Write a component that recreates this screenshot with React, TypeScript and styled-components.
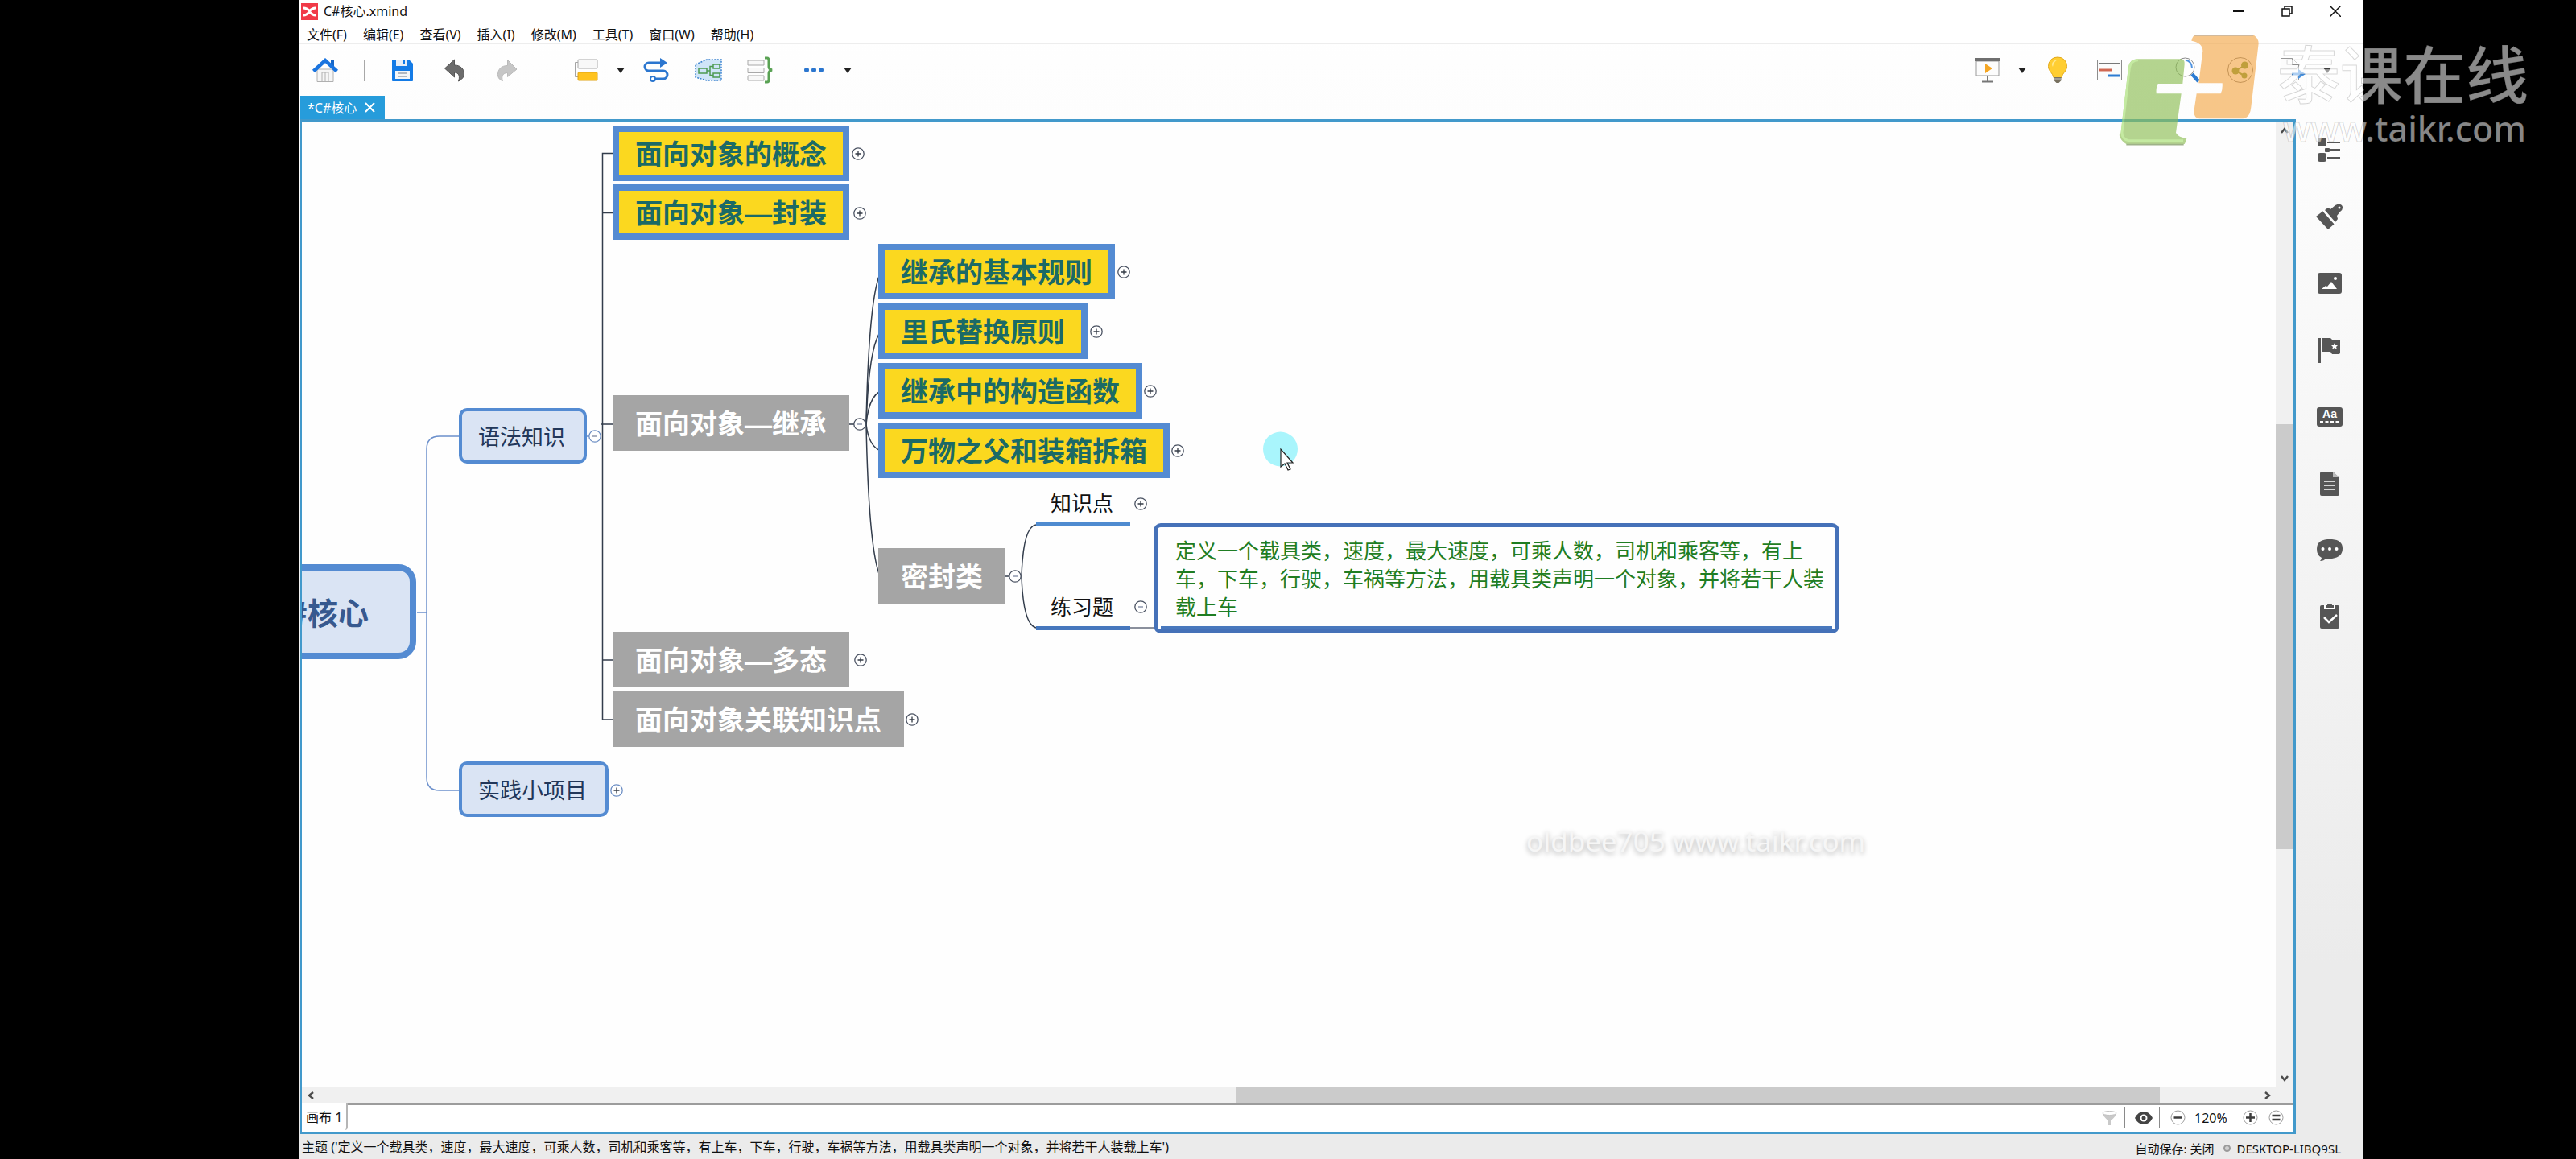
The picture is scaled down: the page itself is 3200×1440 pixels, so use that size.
import React from 'react';
import styled, { createGlobalStyle } from 'styled-components';

const GlobalStyle = createGlobalStyle`
  * { box-sizing: border-box; }
  body { margin: 0; background: #000; }
  button {
    margin: 0; padding: 0; border: 0; background: none;
    font: inherit; color: inherit; cursor: pointer;
  }
  svg { display: block; flex: none; }
`;

const ui = `'Noto Sans', 'Noto Sans CJK SC', sans-serif`;
const cjk = `'Noto Sans CJK SC', 'Noto Sans', sans-serif`;
const frameBlue = '#4299cb';
const topicBlue = '#548bd2';

/* ---------- shell ---------- */

const Page = styled.div`
  position: relative;
  display: flex;
  min-height: 100vh;
  padding: 0 265px 0 371px;
  overflow: hidden;
  background: #000;
  font-family: ${ui};
  font-size: 16px;
  line-height: 24px;
  color: #111;
`;
const AppWindow = styled.div`
  flex: 1;
  min-width: 0;
  display: flex;
  flex-direction: column;
  background: linear-gradient(#fff 0, #fdfdfd 150px, #ebebeb 1200px);
`;
const TitleBar = styled.header`
  display: flex;
  align-items: center;
  height: 28px;
  padding: 0 4px 0 3px;
  background: #fff;
`;
const Title = styled.h1`
  flex: 1;
  margin: 0 0 0 7px;
  font-size: 16px;
  font-weight: 400;
`;
const WindowButton = styled.button`
  display: flex;
  align-items: center;
  justify-content: center;
  width: 60px;
  height: 24px;
`;
const MenuBar = styled.nav`
  display: flex;
  height: 27px;
  background: #fff;
  border-bottom: 2px solid #ededed;
`;
const MenuItem = styled.button`
  padding: 3px 10px 0;
  height: 26px;
`;
const ToolBar = styled.div`
  display: flex;
  justify-content: space-between;
  height: 64px;
  padding-right: 33px;
`;
const ToolGroup = styled.div`
  display: flex;
  align-items: center;
`;
const ToolButton = styled.button<{ $narrow?: boolean }>`
  display: flex;
  align-items: center;
  justify-content: center;
  width: ${p => (p.$narrow ? 22 : 65)}px;
  height: 40px;
`;
const ToolDivider = styled.span`
  width: 1px;
  height: 27px;
  margin: 0 15px 0 16px;
  background: #a8a8a8;
`;
const TabStrip = styled.div`
  display: flex;
  height: 29px;
  padding-left: 2px;
`;
const FileTab = styled.div`
  display: flex;
  align-items: center;
  gap: 10px;
  padding: 0 12px 0 9px;
  background: #269cdb;
  color: #fff;
`;
const Body = styled.div`
  flex: 1;
  display: flex;
  min-height: 0;
  padding-left: 2px;
`;
const Editor = styled.main`
  flex: 1;
  min-width: 0;
  display: flex;
  flex-direction: column;
  border: solid ${frameBlue};
  border-width: 3px 4px 3px 2px;
  background: #fff;
`;
const SidePanel = styled.aside`
  display: flex;
  flex-direction: column;
  align-items: center;
  gap: 51px;
  width: 83px;
  padding-top: 22px;
`;
const SideButton = styled.button`
  width: 34px;
  height: 32px;
`;

/* ---------- editor ---------- */

const CanvasRow = styled.div`
  flex: 1;
  display: flex;
  min-height: 0;
`;
const Canvas = styled.div`
  position: relative;
  flex: 1;
  overflow: hidden;
  background: #fefefe;
`;
const ScrollTrack = styled.div<{ $vertical?: boolean }>`
  display: flex;
  flex-direction: ${p => (p.$vertical ? 'column' : 'row')};
  align-items: center;
  ${p => (p.$vertical ? 'width: 21px;' : 'height: 21px; padding-right: 21px;')}
  background: #f0f0f0;
`;
const ArrowButton = styled.button`
  display: flex;
  align-items: center;
  justify-content: center;
  width: 21px;
  height: 21px;
`;
const ScrollSpace = styled.span<{ $grow: number }>`
  flex: ${p => p.$grow} 0 0;
`;
const ScrollThumb = styled.span<{ $grow: number }>`
  flex: ${p => p.$grow} 0 0;
  align-self: stretch;
  background: #cbcbcb;
`;
const SheetBar = styled.div`
  display: flex;
  justify-content: space-between;
  height: 35px;
  border-top: 2px solid #9c9c9c;
  background: #fff;
`;
const SheetTab = styled.button`
  height: 33px;
  margin-top: -2px;
  padding: 0 5px;
  border-right: 2px solid #b5b5b5;
  border-radius: 0 0 4px 0;
  background: #fff;
`;
const ZoomTools = styled.div`
  display: flex;
  align-items: center;
  height: 31px;
  padding-right: 11px;
`;
const SmallButton = styled.button<{ $left?: number; $right?: number }>`
  margin-left: ${p => p.$left ?? 0}px;
  margin-right: ${p => p.$right ?? 0}px;
`;
const SmallDivider = styled.span`
  width: 1px;
  height: 25px;
  background: #8a8a8a;
`;
const ZoomValue = styled.output`
  width: 62px;
  padding-left: 2px;
  text-align: left;
`;
const StatusBar = styled.footer`
  display: flex;
  justify-content: space-between;
  align-items: center;
  height: 31px;
  padding: 0 27px 0 4px;
  background: #ebebeb;
`;
const StatusInfo = styled.div`
  display: flex;
  align-items: center;
  padding-top: 4px;
  font-size: 15px;
`;
const StatusDot = styled.span`
  width: 9px;
  height: 9px;
  margin: 0 7px 0 12px;
  border: 2px solid #9a9a9a;
  border-radius: 50%;
  background: #d0d0d0;
`;

/* ---------- mind map ---------- */

const Wires = styled.svg`
  position: absolute;
  left: 0;
  top: 0;
  overflow: visible;
`;
const Placed = styled.div<{ $x: number; $y: number }>`
  position: absolute;
  left: ${p => p.$x}px;
  top: ${p => p.$y}px;
  white-space: nowrap;
  font-family: ${cjk};
`;
const Topic = styled(Placed)<{ $done?: boolean }>`
  padding: 3px 20px 0;
  border: 8px solid ${p => (p.$done ? topicBlue : '#a5a5a5')};
  background: ${p => (p.$done ? '#fbd81f' : '#a5a5a5')};
  color: ${p => (p.$done ? '#1b6a66' : '#fff')};
  font-family: 'Liberation Sans', ${cjk};
  font-size: 34px;
  font-weight: 700;
  line-height: 50px;
`;
const Branch = styled(Placed)`
  padding: 0 23px 0 20px;
  border: 4px solid ${topicBlue};
  border-radius: 10px;
  background: #dae4f4;
  color: #22375a;
  font-size: 27px;
  line-height: 61px;
`;
const Root = styled(Placed)`
  width: 241px;
  padding-right: 51px;
  border: 8px solid ${topicBlue};
  border-radius: 22px;
  background: #dae4f4;
  color: #37598f;
  font-size: 38px;
  font-weight: 700;
  line-height: 102px;
  text-align: right;
`;
const Leaf = styled(Placed)<{ $dark?: boolean }>`
  padding: 0 21px 4px 18px;
  border-bottom: 5px solid ${p => (p.$dark ? '#4677bd' : '#4f8bd0')};
  color: #111;
  font-size: 26px;
  line-height: 42px;
`;
const NoteTopic = styled(Placed)`
  width: 852px;
  padding: 10px 10px 0 22px;
  border: 5px solid #4571b8;
  border-radius: 9px;
  background: #fefefe;
  color: #1f7d22;
  font-size: 26px;
  line-height: 35px;
  white-space: normal;
`;
const NoteRule = styled.div`
  height: 4px;
  margin: 8px -6px 0 -18px;
  background: #4878bd;
`;
const Knob = styled.button<{ $x: number; $y: number }>`
  position: absolute;
  left: ${p => p.$x - 8}px;
  top: ${p => p.$y - 8}px;
  width: 16px;
  height: 16px;
`;
const Pointer = styled.svg`
  position: absolute;
  left: 1194px;
  top: 385px;
`;
const CanvasMark = styled.div`
  position: absolute;
  left: 1521px;
  top: 870px;
  font-size: 35px;
  line-height: 48px;
  color: #f6f6f6;
  text-shadow: 0 3px 6px rgba(0, 0, 0, 0.3);
`;

/* ---------- brand overlay ---------- */

const Brand = styled.div`
  position: absolute;
  top: 40px;
  right: 59px;
  display: flex;
  gap: 17px;
  pointer-events: none;
`;
const BrandText = styled.div`
  padding-top: 2px;
  color: rgba(255, 255, 255, 0.54);
  -webkit-text-stroke: 1px rgba(0, 0, 0, 0.16);
  font-weight: 500;
  white-space: nowrap;
`;
const BrandName = styled.div`
  font-family: ${cjk};
  font-size: 78px;
  line-height: 94px;
`;
const BrandSite = styled.div`
  padding-left: 7px;
  font-size: 43px;
  line-height: 48px;
`;

/* ---------- icons ---------- */

const Icon = ({ children, h = 34 }: { children: React.ReactNode; h?: number }) => (
  <svg width="34" height={h} viewBox={`0 0 34 ${h}`} fill="none" aria-hidden="true">{children}</svg>
);
const Caret = () => (
  <svg width="10" height="8" viewBox="0 0 10 8" aria-hidden="true"><path d="M0 1h10L5 8z" fill="#222" /></svg>
);

const HomeIcon = () => (
  <Icon>
    <path d="M7 16h20v15.500H7z" fill="#f6f6f6" stroke="#b0b0b0" />
    <path d="M13 31V20h8v11M17 20v11" stroke="#b0b0b0" />
    <path d="M24 4h4v9h-4z" fill="#1767c8" />
    <path d="M2.500 18.500 17 5l14.500 13.500" stroke="#1a74df" strokeWidth="4.500" />
  </Icon>
);
const SaveIcon = () => (
  <Icon>
    <path d="M3 4h21l5 5v21a1 1 0 0 1-1 1H4a1 1 0 0 1-1-1z" fill="#147be6" />
    <path d="M8 4h14v8H8z" fill="#e8eef6" /><path d="M16 5h3v5h-3z" fill="#147be6" />
    <path d="M7 18h18v10H7z" fill="#f4f6f8" />
    <path d="M10 21h12M10 25h12" stroke="#9aa4ae" strokeWidth="1.500" />
  </Icon>
);
const UndoIcon = () => (
  <Icon>
    <path d="M15.500 4v7c8 0 12 5 12 11 0 4-3 7-7 9 2-5 1-11-5-11v6L3.500 15z" fill="#6c6c6c" stroke="#555" />
  </Icon>
);
const RedoIcon = () => (
  <Icon>
    <path d="M16.500 4.500v7c-8 0-12 5-12 11 0 4 2 7 6 8-2-5 0-10 6-10v5L28 16z" fill="#c6c6c6" stroke="#bababa" />
  </Icon>
);
const TopicIcon = () => (
  <Icon>
    <path d="M7 7.500H3.500v18H7" stroke="#a4a4a4" />
    <rect x="7" y="4" width="24" height="11" rx="1" fill="#f8f8f8" stroke="#a8a8a8" />
    <rect x="7" y="20" width="24" height="10" rx="1" fill="#ffc31f" stroke="#e0a416" />
  </Icon>
);
const RelationIcon = () => (
  <Icon>
    <path d="M24 8H8a5 5 0 0 0 0 10h18a5 5 0 0 1 0 10H16" stroke="#2b76cf" strokeWidth="3" />
    <path d="m22 2 9 6-9 6z" fill="#2b76cf" />
    <circle cx="13" cy="28" r="3" stroke="#2b76cf" strokeWidth="2" fill="#fff" />
  </Icon>
);
const BoundaryIcon = () => (
  <Icon>
    <path d="M1 10 15 4h18v26H15L1 26z" fill="#cfe5f8" stroke="#3a82d0" strokeWidth="1.500" strokeDasharray="2 1.500" />
    <path d="M5 15h10v6H5zM23 10h8v5h-8zM23 21h8v5h-8zM15 18h4M23 12.500h-4v11h4" stroke="#4e9a50" strokeWidth="1.500" />
  </Icon>
);
const SummaryIcon = () => (
  <Icon>
    <path d="M1 5h20v6H1zM1 14.500h20v6H1zM1 24h20v6H1z" fill="#f8f8f8" stroke="#a8a8a8" />
    <path d="M22 2h3q2 0 2 3v8q0 3 4 4-4 1-4 4v8q0 3-2 3h-3" stroke="#5aa254" strokeWidth="3" />
  </Icon>
);
const MoreIcon = () => (
  <Icon>
    <g fill="#2b76cf"><circle cx="9" cy="17" r="3" /><circle cx="18" cy="17" r="3" /><circle cx="27" cy="17" r="3" /></g>
  </Icon>
);
const PresentIcon = () => (
  <Icon>
    <path d="M3 6h28v18H3z" fill="#fcfcfc" stroke="#999" /><path d="M1 2h32v4H1z" fill="#6f6f6f" />
    <path d="m14 9 9 6-9 6z" fill="#f5a623" /><path d="M17 24v7M10 31.500h14" stroke="#777" strokeWidth="2" />
  </Icon>
);
const BulbIcon = () => (
  <Icon>
    <path d="M17 1a11 11 0 0 1 11.500 11.500c0 6-5.500 8-6.500 14H12c-1-6-6.500-8-6.500-14A11 11 0 0 1 17 1z" fill="#ffce32" stroke="#e3a91c" />
    <path d="M11 7q3-3 6-3-5 3-6 9-2-3 0-6z" fill="#ffe88c" />
    <path d="M12.500 26h9v4l-3 3h-3l-3-3z" fill="#77705f" /><path d="M12.500 28h9" stroke="#ccc" />
  </Icon>
);
const GanttIcon = () => (
  <Icon>
    <path d="M1.500 4.500h30v25h-30z" fill="#fbfbfb" stroke="#8d8d8d" /><path d="M3.500 11V8.500h26V11" stroke="#777" />
    <path d="M3 17h16" stroke="#cf6651" strokeWidth="3" /><path d="M15 24h15" stroke="#2b7bd2" strokeWidth="3" />
  </Icon>
);
const SearchIcon = () => (
  <Icon>
    <path d="m22 22 8 9" stroke="#2b7bd2" strokeWidth="4.500" />
    <circle cx="13.500" cy="13.500" r="11.500" stroke="#8a8a8a" fill="#fff" fillOpacity=".4" />
    <path d="M14 4.500q8 2 8 10" stroke="#4f93e0" strokeWidth="2" />
  </Icon>
);
const ShareIcon = () => (
  <Icon>
    <circle cx="17" cy="17" r="15.500" stroke="#6d6d6c" />
    <path d="M23 11 11 18l11 6" stroke="#5f8f1e" strokeWidth="2" />
    <g fill="#5f8f1e"><circle cx="22.500" cy="11" r="4.500" /><circle cx="11" cy="18" r="4.500" /><circle cx="22" cy="24" r="3.500" /></g>
  </Icon>
);
const ExportIcon = () => (
  <Icon>
    <path d="M2.500 2.500h14l8 8v19h-22z" fill="#fcfcfc" stroke="#999" /><path d="M16.500 2.500v8h8" stroke="#999" />
    <path d="M16 20.500h8v-4.500l9 6-9 6v-4.500h-8z" fill="#4a94e2" />
  </Icon>
);

const ink = '#565656';
const sideIcons: [string, React.ReactNode][] = [
  ['大纲', <g key="g" fill={ink}><rect x="2" y="1" width="11" height="11" rx="3" /><rect x="11" y="14" width="6" height="5" rx="1" /><rect x="2" y="20" width="11" height="11" rx="3" /><path d="M14 6h16v2H14zM18 15h12v2H18zM14 25h16v2H14z" /></g>],
  ['格式', <g key="g" fill={ink}><path d="M0 16 9 9l14 16-8 7zM11 8l4-3 3 2 6-5q5-3 8 0 3 4-2 8l-4 5 1 4-3 4z" /><path d="m9 9 15 17" stroke="#fff" strokeWidth="1.500" /><circle cx="29" cy="5" r="1.500" fill="#fff" /></g>],
  ['图片', <g key="g"><rect x="2" y="3" width="30" height="26" rx="3" fill={ink} /><path d="m7 23 5-4 2 1 5-6 7 9z" fill="#fff" /><circle cx="24" cy="10" r="2" fill="#fff" /></g>],
  ['图标', <g key="g" fill={ink}><path d="M2 1h4v31H2zM7 1h11l2 2h10v16q0 2-2 2h-8l-2-3H7z" /><path d="m23 7 1 3h3l-2 2 1 3-3-2-3 2 1-3-2-2h3z" fill="#fff" /></g>],
  ['标签', <g key="g"><rect x="1" y="4" width="32" height="24" rx="3" fill={ink} /><text x="17" y="17" fontFamily="Liberation Sans, sans-serif" fontSize="14" fontWeight="700" textAnchor="middle" fill="#fff">Aa</text><path d="M5 22.500h24" stroke="#fff" strokeWidth="3" strokeDasharray="4 2.500" /></g>],
  ['备注', <g key="g"><path d="M7 1h14l8 8v20q0 2-2 2H7q-2 0-2-2V3q0-2 2-2z" fill={ink} /><path d="M21 1v7h8z" fill="#bbb" /><path d="M10 13h14M10 18h14M10 23h14" stroke="#fff" strokeWidth="1.500" /></g>],
  ['批注', <g key="g"><path d="M14 2h6q13 1 13 11.500T20 26H12q-2 3-7 3 2-2 2-4-6-3-6-11Q1 3 14 2z" fill={ink} /><g fill="#fff"><circle cx="8.500" cy="14" r="2" /><circle cx="17" cy="14" r="2" /><circle cx="25.500" cy="14" r="2" /></g></g>],
  ['任务', <g key="g"><rect x="5" y="1" width="24" height="29" rx="2" fill={ink} /><path d="M10 1h14v5H10z" fill="#fff" /><path d="M12 1h2q0-2 3-2t3 2h2v3H12z" fill={ink} /><path d="m10 16 6 6 10-9" stroke="#fff" strokeWidth="2.500" fill="none" /></g>],
];

const Chevron = ({ turn }: { turn: number }) => (
  <svg width="12" height="12" viewBox="0 0 12 12" aria-hidden="true">
    <path d="m2 9 4-5 4 5" transform={`rotate(${turn} 6 6)`} fill="none" stroke="#4a4a4a" strokeWidth="2.500" />
  </svg>
);
const RoundIcon = ({ d }: { d: string }) => (
  <svg width="19" height="19" viewBox="0 0 19 19" aria-hidden="true">
    <circle cx="9.500" cy="9.500" r="8.500" fill="#fff" stroke="#9a9a9a" />
    <path d={d} stroke="#3d3d3d" strokeWidth="2.500" />
  </svg>
);

/* ---------- data ---------- */

const menus = ['文件(F)', '编辑(E)', '查看(V)', '插入(I)', '修改(M)', '工具(T)', '窗口(W)', '帮助(H)'];

const topics = [
  { x: 386, y: 5, text: '面向对象的概念', done: true },
  { x: 386, y: 78, text: '面向对象—封装', done: true },
  { x: 716, y: 152, text: '继承的基本规则', done: true },
  { x: 716, y: 226, text: '里氏替换原则', done: true },
  { x: 716, y: 300, text: '继承中的构造函数', done: true },
  { x: 716, y: 374, text: '万物之父和装箱拆箱', done: true },
  { x: 386, y: 340, text: '面向对象—继承' },
  { x: 716, y: 530, text: '密封类' },
  { x: 386, y: 634, text: '面向对象—多态' },
  { x: 386, y: 708, text: '面向对象关联知识点' },
];

const knobs = [
  { x: 691, y: 40 }, { x: 693, y: 114 }, { x: 1021, y: 187 }, { x: 987, y: 261 },
  { x: 1054, y: 335 }, { x: 1088, y: 409 }, { x: 1042, y: 475 }, { x: 694, y: 669 },
  { x: 758, y: 743 }, { x: 391, y: 831, blue: true },
  { x: 693, y: 376, open: true }, { x: 886, y: 565, open: true },
  { x: 1042, y: 603, open: true }, { x: 364, y: 391, open: true, blue: true },
];

const childEnds = [192, 264, 336, 408, 562];
const exercise = '定义一个载具类，速度，最大速度，可乘人数，司机和乘客等，有上车，下车，行驶，车祸等方法，用载具类声明一个对象，并将若干人装载上车';

/* ---------- app ---------- */

const MindMap = () => (
  <Canvas>
    <Wires width="1" height="1" fill="none" aria-hidden="true">
      <path d="M143 610h12M195 391h-24q-16 0-16 16v408q0 16 16 16h24M353 391h4" stroke="#6c90cc" strokeWidth="1.500" />
      <g stroke="#333d4c" strokeWidth="1.500">
        <path d="M386 39.500h-12.500v703.500H386M374 113.500h12M372 376h14M374 669h12M680 376h6M872 565h7" />
        {childEnds.map(y => (
          <path key={y} d={`M701 376Q704 ${y + Math.round((376 - y) * 0.2)} 717 ${y}`} />
        ))}
        <path d="M894 565Q896 503 912 501M894 565Q896 625 912 629" />
      </g>
      <path d="M1029 629h30" stroke="#8a8f9c" strokeWidth="2" />
    </Wires>
    <Root $x={-99} $y={550}>C#核心</Root>
    <Branch $x={195} $y={356}>语法知识</Branch>
    <Branch $x={195} $y={795}>实践小项目</Branch>
    {topics.map(t => (
      <Topic key={t.text} $x={t.x} $y={t.y} $done={t.done}>{t.text}</Topic>
    ))}
    <Leaf $x={912} $y={452}>知识点</Leaf>
    <Leaf $x={912} $y={581} $dark>练习题</Leaf>
    <NoteTopic $x={1058} $y={499}>
      {exercise}
      <NoteRule />
    </NoteTopic>
    {knobs.map(k => (
      <Knob key={`${k.x}-${k.y}`} $x={k.x} $y={k.y} aria-label={k.open ? '收起' : '展开'}>
        <svg width="16" height="16" viewBox="0 0 16 16" aria-hidden="true">
          <circle cx="8" cy="8" r="7.200" fill="#fff" stroke={k.blue ? '#6c8ec4' : '#4a5262'} strokeWidth="1.300" />
          <path d={k.open ? 'M5 8h6' : 'M4.500 8h7M8 4.500v7'} stroke={k.open ? '#7a86a0' : '#333a46'} strokeWidth="1.300" />
        </svg>
      </Knob>
    ))}
    <Pointer width="44" height="50" viewBox="0 0 44 50" aria-hidden="true">
      <circle cx="21.500" cy="22" r="21.500" fill="#a9f5fc" />
      <path d="M22 22v22l5-4 4 8 3-1-4-8h7z" fill="#fff" stroke="#222" strokeWidth="1.200" />
    </Pointer>
    <CanvasMark>oldbee705 www.taikr.com</CanvasMark>
  </Canvas>
);

const App = () => (
  <Page>
    <GlobalStyle />
    <AppWindow>
      <TitleBar>
        <svg width="21" height="21" viewBox="0 0 21 21" aria-hidden="true">
          <path d="M0 0h21v21H0z" fill="#f13a48" />
          <path d="M3 6q4 0 7.500 3.500Q14 6 18 6M3 15q4 0 7.500-4.500Q14 15 18 15" stroke="#fff" strokeWidth="3" fill="none" />
        </svg>
        <Title>C#核心.xmind</Title>
        <WindowButton aria-label="最小化">
          <svg width="14" height="14"><path d="M0 7h14" stroke="#111" strokeWidth="2" /></svg>
        </WindowButton>
        <WindowButton aria-label="还原">
          <svg width="14" height="14" fill="none" stroke="#111" strokeWidth="1.500"><path d="M1 4h9v9H1zM4 4V1h9v9h-3" /></svg>
        </WindowButton>
        <WindowButton aria-label="关闭">
          <svg width="14" height="14"><path d="m0 0 14 14M14 0 0 14" stroke="#111" strokeWidth="1.500" /></svg>
        </WindowButton>
      </TitleBar>
      <MenuBar>{menus.map(m => <MenuItem key={m}>{m}</MenuItem>)}</MenuBar>
      <ToolBar>
        <ToolGroup>
          <ToolButton aria-label="主页"><HomeIcon /></ToolButton>
          <ToolDivider />
          <ToolButton aria-label="保存"><SaveIcon /></ToolButton>
          <ToolButton aria-label="撤销"><UndoIcon /></ToolButton>
          <ToolButton aria-label="重做"><RedoIcon /></ToolButton>
          <ToolDivider />
          <ToolButton aria-label="主题"><TopicIcon /></ToolButton>
          <ToolButton $narrow aria-label="主题选项"><Caret /></ToolButton>
          <ToolButton aria-label="联系"><RelationIcon /></ToolButton>
          <ToolButton aria-label="外框"><BoundaryIcon /></ToolButton>
          <ToolButton aria-label="概要"><SummaryIcon /></ToolButton>
          <ToolButton aria-label="更多"><MoreIcon /></ToolButton>
          <ToolButton $narrow aria-label="更多选项"><Caret /></ToolButton>
        </ToolGroup>
        <ToolGroup>
          <ToolButton aria-label="演示"><PresentIcon /></ToolButton>
          <ToolButton $narrow aria-label="演示选项"><Caret /></ToolButton>
          <ToolButton aria-label="头脑风暴"><BulbIcon /></ToolButton>
          <ToolButton aria-label="甘特图"><GanttIcon /></ToolButton>
          <ToolDivider />
          <ToolButton aria-label="搜索"><SearchIcon /></ToolButton>
          <ToolButton aria-label="分享"><ShareIcon /></ToolButton>
          <ToolButton aria-label="导出"><ExportIcon /></ToolButton>
          <ToolButton $narrow aria-label="导出选项"><Caret /></ToolButton>
        </ToolGroup>
      </ToolBar>
      <TabStrip>
        <FileTab>
          *C#核心
          <button aria-label="关闭标签">
            <svg width="13" height="13"><path d="m1 1 11 11M12 1 1 12" stroke="#fff" strokeWidth="2" /></svg>
          </button>
        </FileTab>
      </TabStrip>
      <Body>
        <Editor>
          <CanvasRow>
            <MindMap />
            <ScrollTrack $vertical>
              <ArrowButton aria-label="向上"><Chevron turn={0} /></ArrowButton>
              <ScrollSpace $grow={355} />
              <ScrollThumb $grow={528} />
              <ScrollSpace $grow={274} />
              <ArrowButton aria-label="向下"><Chevron turn={180} /></ArrowButton>
            </ScrollTrack>
          </CanvasRow>
          <ScrollTrack>
            <ArrowButton aria-label="向左"><Chevron turn={270} /></ArrowButton>
            <ScrollSpace $grow={1140} />
            <ScrollThumb $grow={1147} />
            <ScrollSpace $grow={123} />
            <ArrowButton aria-label="向右"><Chevron turn={90} /></ArrowButton>
          </ScrollTrack>
          <SheetBar>
            <SheetTab>画布 1</SheetTab>
            <ZoomTools>
              <SmallButton $right={9} aria-label="筛选">
                <svg width="19" height="20" viewBox="0 0 19 20" aria-hidden="true">
                  <path d="M1 4q0 4 7 9v6h3v-6q7-5 7-9z" fill="#c9c9c9" /><ellipse cx="9.500" cy="4" rx="8.500" ry="2.500" fill="#fff" stroke="#c2c2c2" />
                </svg>
              </SmallButton>
              <SmallDivider />
              <SmallButton $left={12} $right={8} aria-label="显示">
                <svg width="22" height="16" viewBox="0 0 22 16" aria-hidden="true">
                  <path d="M0 8Q4 0 11 0t11 8q-4 8-11 8T0 8z" fill="#444" /><circle cx="11" cy="8" r="4.500" fill="#fff" /><circle cx="11" cy="8" r="2.500" fill="#444" />
                </svg>
              </SmallButton>
              <SmallDivider />
              <SmallButton $left={13} $right={9} aria-label="缩小"><RoundIcon d="M4.500 9.500h10" /></SmallButton>
              <ZoomValue>120%</ZoomValue>
              <SmallButton $right={13} aria-label="放大"><RoundIcon d="M4 9.500h11M9.500 4v11" /></SmallButton>
              <SmallButton aria-label="适合窗口"><RoundIcon d="M4.500 7h10M4.500 12h10" /></SmallButton>
            </ZoomTools>
          </SheetBar>
        </Editor>
        <SidePanel>
          {sideIcons.map(([name, art]) => (
            <SideButton key={name} aria-label={name}><Icon h={32}>{art}</Icon></SideButton>
          ))}
        </SidePanel>
      </Body>
      <StatusBar>
        <span>主题 ('{exercise}')</span>
        <StatusInfo>
          <span>自动保存: 关闭</span>
          <StatusDot />
          <span>DESKTOP-LIBQ9SL</span>
        </StatusInfo>
      </StatusBar>
    </AppWindow>
    <Brand>
      <svg width="184" height="147" viewBox="150 30 552 441" aria-hidden="true">
        <g opacity="0.65">
          <path d="M232 130h163q14 2 12 20l-7 72h-92q-8 16-6 37h93l-20 146q10 18 40 20-2 12-8 22H190q-22-14-26-34 5-3 6-10l28-243q4-30 34-30z" fill="#8dbe54" />
          <path d="M234 134q-28 0-32 30l-28 240q0 24 24 30h204" fill="none" stroke="#a6e070" strokeWidth="9" />
          <path d="M190 449h214" stroke="#6d8a4c" strokeWidth="5" />
          <path d="M447 40h216q20 12 20 32l-28 238q-4 40-30 42H462q-20-4-20-26l10-67h90q8-16 6-39h-88l15-120q0-30-42-38 4-18 14-22z" fill="#f4a94b" />
          <path d="M445 42h218" stroke="#b99468" strokeWidth="6" />
        </g>
      </svg>
      <BrandText>
        <BrandName>泰课在线</BrandName>
        <BrandSite>www.taikr.com</BrandSite>
      </BrandText>
    </Brand>
  </Page>
);

export default App;
